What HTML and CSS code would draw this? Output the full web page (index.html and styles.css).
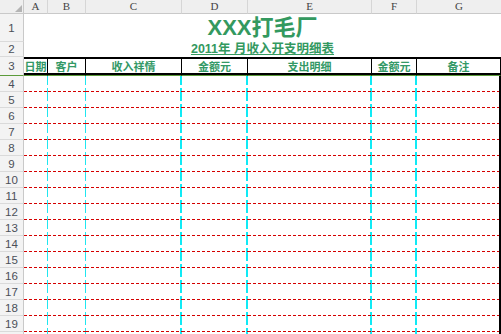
FILE: index.html
```html
<!DOCTYPE html>
<html lang="zh-CN">
<head>
<meta charset="utf-8">
<title>XXX打毛厂</title>
<link rel="stylesheet" href="styles.css">
</head>
<body>
<div class="sheet">
  <div class="row colhead">
    <div class="corner"><svg class="tri" width="7" height="7" viewBox="0 0 7 7"><polygon points="7,0 7,7 0,7" fill="#b4b4b4"/></svg></div>
    <div class="ch">A</div><div class="ch">B</div><div class="ch">C</div><div class="ch">D</div><div class="ch">E</div><div class="ch">F</div><div class="ch last">G</div>
  </div>
  <div class="row r1">
    <div class="rh">1</div>
    <div class="title">XXX打毛厂</div>
  </div>
  <div class="row r2">
    <div class="rh">2</div>
    <div class="subtitle"><span>2011年 月收入开支明细表</span></div>
  </div>
  <div class="row r3">
    <div class="rh rh3">3</div>
    <div class="hc">日期</div><div class="hc">客户</div><div class="hc">收入祥情</div><div class="hc">金额元</div><div class="hc">支出明细</div><div class="hc">金额元</div><div class="hc hg">备注</div>
  </div>
  <div class="row data"><div class="rh">4</div><div class="c"></div><div class="c"></div><div class="c w"></div><div class="c w"></div><div class="c w"></div><div class="c w"></div><div class="c g"></div></div>
  <div class="row data"><div class="rh">5</div><div class="c"></div><div class="c"></div><div class="c w"></div><div class="c w"></div><div class="c w"></div><div class="c w"></div><div class="c g"></div></div>
  <div class="row data"><div class="rh">6</div><div class="c"></div><div class="c"></div><div class="c w"></div><div class="c w"></div><div class="c w"></div><div class="c w"></div><div class="c g"></div></div>
  <div class="row data"><div class="rh">7</div><div class="c"></div><div class="c"></div><div class="c w"></div><div class="c w"></div><div class="c w"></div><div class="c w"></div><div class="c g"></div></div>
  <div class="row data"><div class="rh">8</div><div class="c"></div><div class="c"></div><div class="c w"></div><div class="c w"></div><div class="c w"></div><div class="c w"></div><div class="c g"></div></div>
  <div class="row data"><div class="rh">9</div><div class="c"></div><div class="c"></div><div class="c w"></div><div class="c w"></div><div class="c w"></div><div class="c w"></div><div class="c g"></div></div>
  <div class="row data"><div class="rh">10</div><div class="c"></div><div class="c"></div><div class="c w"></div><div class="c w"></div><div class="c w"></div><div class="c w"></div><div class="c g"></div></div>
  <div class="row data"><div class="rh">11</div><div class="c"></div><div class="c"></div><div class="c w"></div><div class="c w"></div><div class="c w"></div><div class="c w"></div><div class="c g"></div></div>
  <div class="row data"><div class="rh">12</div><div class="c"></div><div class="c"></div><div class="c w"></div><div class="c w"></div><div class="c w"></div><div class="c w"></div><div class="c g"></div></div>
  <div class="row data"><div class="rh">13</div><div class="c"></div><div class="c"></div><div class="c w"></div><div class="c w"></div><div class="c w"></div><div class="c w"></div><div class="c g"></div></div>
  <div class="row data"><div class="rh">14</div><div class="c"></div><div class="c"></div><div class="c w"></div><div class="c w"></div><div class="c w"></div><div class="c w"></div><div class="c g"></div></div>
  <div class="row data"><div class="rh">15</div><div class="c"></div><div class="c"></div><div class="c w"></div><div class="c w"></div><div class="c w"></div><div class="c w"></div><div class="c g"></div></div>
  <div class="row data"><div class="rh">16</div><div class="c"></div><div class="c"></div><div class="c w"></div><div class="c w"></div><div class="c w"></div><div class="c w"></div><div class="c g"></div></div>
  <div class="row data"><div class="rh">17</div><div class="c"></div><div class="c"></div><div class="c w"></div><div class="c w"></div><div class="c w"></div><div class="c w"></div><div class="c g"></div></div>
  <div class="row data"><div class="rh">18</div><div class="c"></div><div class="c"></div><div class="c w"></div><div class="c w"></div><div class="c w"></div><div class="c w"></div><div class="c g"></div></div>
  <div class="row data"><div class="rh">19</div><div class="c"></div><div class="c"></div><div class="c w"></div><div class="c w"></div><div class="c w"></div><div class="c w"></div><div class="c g"></div></div>
  <div class="row data"><div class="rh"></div><div class="c"></div><div class="c"></div><div class="c w"></div><div class="c w"></div><div class="c w"></div><div class="c w"></div><div class="c g"></div></div>
</div>
</body>
</html>
```
FILE: styles.css
```css
html, body {
  margin: 0;
  padding: 0;
  background: #ffffff;
  overflow: hidden;
}
body {
  width: 501px;
  height: 334px;
  font-family: "Liberation Sans", "Noto Sans CJK SC", sans-serif;
}
.sheet {
  width: 501px;
}
.row {
  display: grid;
  grid-template-columns: 24px 24px 38px 96px 66px 124px 45px 84px;
}
.row > div {
  box-sizing: border-box;
}

/* column header */
.colhead {
  height: 14px;
  background: #efefef;
}
.corner {
  position: relative;
  border-right: 1px solid #c9c9c9;
  border-bottom: 1px solid #c9c9c9;
}
.tri {
  position: absolute;
  left: 15px;
  top: 5px;
}
.ch {
  border-right: 1px solid #d6d6d6;
  border-bottom: 1px solid #c9c9c9;
  font-family: "Liberation Serif", serif;
  font-size: 11px;
  line-height: 13px;
  color: #444;
  text-align: center;
}
.ch.last {
  border-right: none;
}

/* row header */
.rh {
  background: #f3f3f3;
  border-right: 1px solid #c9c9c9;
  border-bottom: 1px solid #dadada;
  font-family: "Liberation Sans", sans-serif;
  font-size: 11.5px;
  color: #4a4f58;
  display: flex;
  align-items: center;
  justify-content: center;
}

/* title rows */
.r1 { height: 28px; }
.r2 { height: 15px; }
.title {
  grid-column: 2 / -1;
  text-align: center;
  color: #33995f;
  font-weight: bold;
  font-size: 22px;
  line-height: 26px;
  padding-top: 1px;
}
.subtitle {
  grid-column: 2 / -1;
  text-align: center;
  color: #33995f;
  font-weight: bold;
  font-size: 12.5px;
  line-height: 14px;
}
.subtitle span {
  text-decoration: underline;
  text-underline-offset: 1px;
}

/* header row 3 */
.r3 { height: 19px; }
.rh3 {
  border-bottom: 1px solid #5b9b3a;
}
.hc {
  border-top: 2px solid #000;
  border-right: 1px solid #000;
  border-bottom: 1px solid #5b9b3a;
  box-shadow: inset 0 -2px 0 #000;
  color: #339966;
  font-family: "Noto Sans CJK SC", sans-serif;
  font-weight: bold;
  font-size: 11px;
  line-height: 14px;
  text-align: center;
  white-space: nowrap;
}

/* data rows */
.data { height: 16px; }
.c {
  background:
    repeating-linear-gradient(90deg, #d40000 0 3px, transparent 3px 5px) left bottom / 100% 1px no-repeat,
    repeating-linear-gradient(180deg, #20e6f0 0 9px, transparent 9px 12px) right top / 1px 100% no-repeat;
}
.c.w {
  background:
    repeating-linear-gradient(90deg, #d40000 0 3px, transparent 3px 5px) left bottom / 100% 1px no-repeat,
    repeating-linear-gradient(180deg, #10eaf5 0 9px, transparent 9px 12px) right top / 2px 100% no-repeat;
}
.c.g {
  background:
    repeating-linear-gradient(90deg, #d40000 0 3px, transparent 3px 5px) left bottom / 100% 1px no-repeat;
  border-right: 2px solid #000;
}
```
